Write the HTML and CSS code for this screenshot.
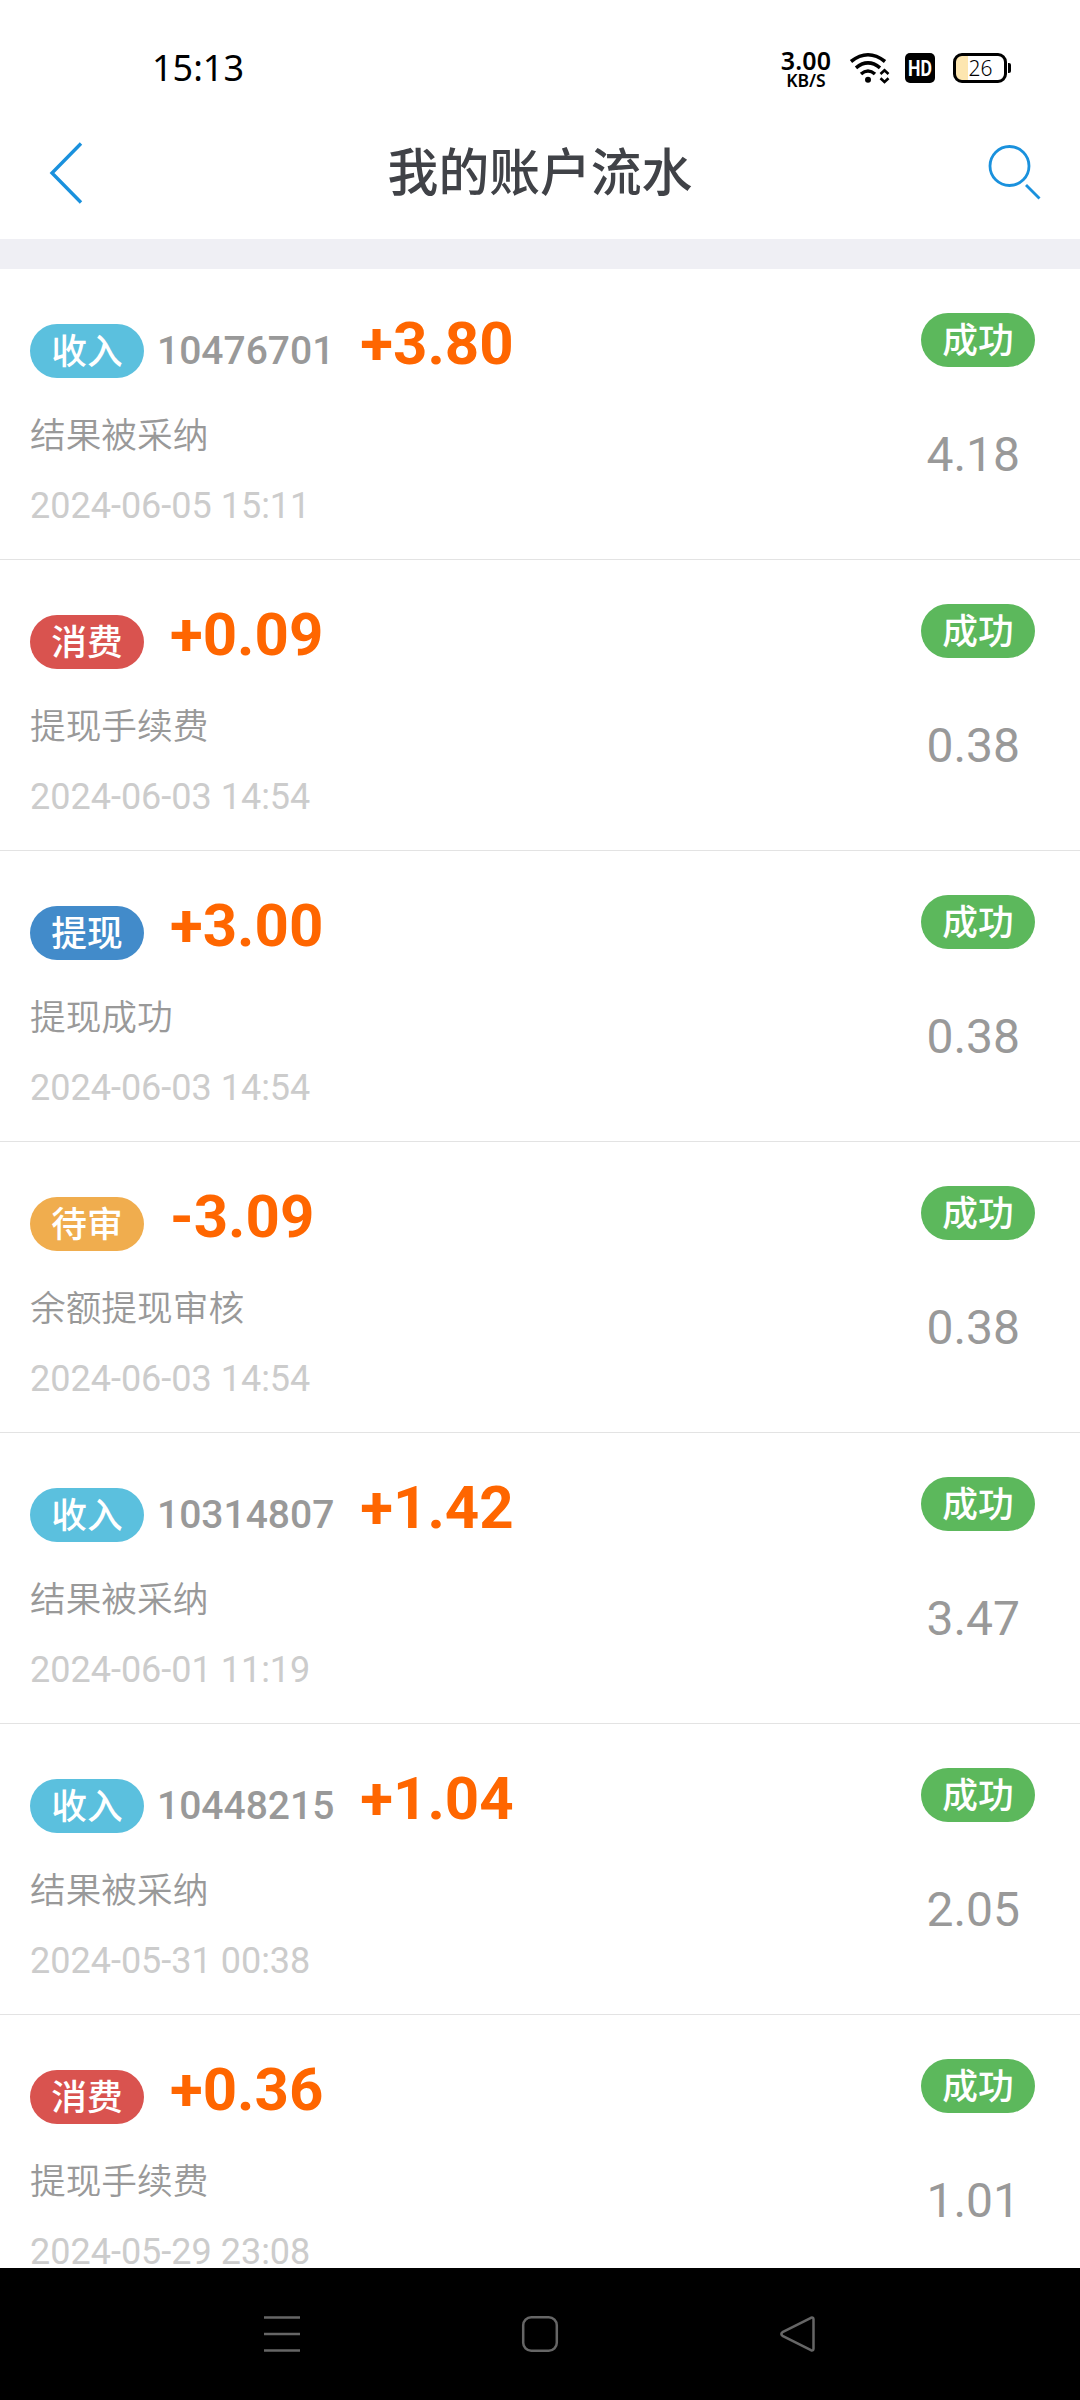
FILE: index.html
```html
<!DOCTYPE html>
<html lang="zh-CN">
<head>
<meta charset="utf-8">
<title>我的账户流水</title>
<link rel="stylesheet" href="styles.css">
</head>
<body>
<div class="screen">
  <div class="status">
    <span class="clock">15:13</span>
    <div class="status-right">
      <div class="speed"><span class="rate">3.00</span><span class="unit">KB/S</span></div>
      <svg class="wifi" width="42" height="32" viewBox="0 0 42 32" fill="none" stroke="#000">
        <path d="M2 9.5Q19 -4 36 9.5" stroke-width="3.6"/>
        <path d="M7 15.8Q19 6 31 15.8" stroke-width="3.6"/>
        <path d="M12 22Q19 16 26 22" stroke-width="3.6"/>
        <circle cx="19" cy="27.8" r="3" fill="#000" stroke="none"/>
        <path d="M31.5 22L35.5 18.3L39.5 22M31.5 26.3L35.5 30L39.5 26.3" stroke-width="2.6"/>
      </svg>
      <span class="hd"><span class="hd-text">HD</span></span>
      <div class="battery"><span class="level">26</span></div>
      <span class="nub"></span>
    </div>
  </div>
  <header class="titlebar">
    <svg width="40" height="64" viewBox="0 0 40 64" fill="none" stroke="#1a91dd" stroke-width="3.4"><path d="M35 2.5L6 32L35 61.500"/></svg>
    <h1>我的账户流水</h1>
    <svg width="56" height="56" viewBox="0 0 56 56" fill="none" stroke="#1a91dd" stroke-width="2.8"><circle cx="22.500" cy="21" r="19.500"/><path d="M39 40L52.500 53.500"/></svg>
  </header>
  <main class="list">
    <section class="row">
      <div class="info">
        <div class="head"><span class="badge income">收入</span><span class="order">10476701</span><span class="amount">+3.80</span></div>
        <p class="desc">结果被采纳</p><p class="date">2024-06-05 15:11</p>
      </div>
      <div class="side"><span class="badge ok">成功</span><span class="balance">4.18</span></div>
    </section>
    <section class="row">
      <div class="info">
        <div class="head"><span class="badge expense">消费</span><span class="amount">+0.09</span></div>
        <p class="desc">提现手续费</p><p class="date">2024-06-03 14:54</p>
      </div>
      <div class="side"><span class="badge ok">成功</span><span class="balance">0.38</span></div>
    </section>
    <section class="row">
      <div class="info">
        <div class="head"><span class="badge withdraw">提现</span><span class="amount">+3.00</span></div>
        <p class="desc">提现成功</p><p class="date">2024-06-03 14:54</p>
      </div>
      <div class="side"><span class="badge ok">成功</span><span class="balance">0.38</span></div>
    </section>
    <section class="row">
      <div class="info">
        <div class="head"><span class="badge pending">待审</span><span class="amount">-3.09</span></div>
        <p class="desc">余额提现审核</p><p class="date">2024-06-03 14:54</p>
      </div>
      <div class="side"><span class="badge ok">成功</span><span class="balance">0.38</span></div>
    </section>
    <section class="row">
      <div class="info">
        <div class="head"><span class="badge income">收入</span><span class="order">10314807</span><span class="amount">+1.42</span></div>
        <p class="desc">结果被采纳</p><p class="date">2024-06-01 11:19</p>
      </div>
      <div class="side"><span class="badge ok">成功</span><span class="balance">3.47</span></div>
    </section>
    <section class="row">
      <div class="info">
        <div class="head"><span class="badge income">收入</span><span class="order">10448215</span><span class="amount">+1.04</span></div>
        <p class="desc">结果被采纳</p><p class="date">2024-05-31 00:38</p>
      </div>
      <div class="side"><span class="badge ok">成功</span><span class="balance">2.05</span></div>
    </section>
    <section class="row">
      <div class="info">
        <div class="head"><span class="badge expense">消费</span><span class="amount">+0.36</span></div>
        <p class="desc">提现手续费</p><p class="date">2024-05-29 23:08</p>
      </div>
      <div class="side"><span class="badge ok">成功</span><span class="balance">1.01</span></div>
    </section>
  </main>
  <nav class="navbar">
    <svg width="40" height="40" viewBox="0 0 40 40" fill="none" stroke="#666" stroke-width="2.500"><path d="M2 3.500H38M2 20H38M2 36.500H38"/></svg>
    <svg width="40" height="40" viewBox="0 0 40 40" fill="none" stroke="#666" stroke-width="2.500"><rect x="3.200" y="3.200" width="33.600" height="33.600" rx="8"/></svg>
    <svg width="40" height="40" viewBox="0 0 40 40" fill="none" stroke="#666" stroke-width="2.500" stroke-linejoin="round"><path d="M4.500 18.200L33 3.800Q35.500 3 35.500 5.500V34.500Q35.500 37 33 36.200L4.500 21.800Q2.200 20 4.500 18.200Z"/></svg>
  </nav>
</div>
</body>
</html>
```
FILE: styles.css
```css
* { box-sizing: border-box; }
body {
  margin: 0;
  background: #fff;
  font-family: Roboto, "Noto Sans CJK SC", sans-serif;
}
h1, p { margin: 0; }
svg { display: block; flex: none; }
.screen {
  width: 1080px;
  height: 2400px;
  display: flex;
  flex-direction: column;
  overflow: hidden;
}
.status {
  height: 106px;
  flex: none;
  display: flex;
  justify-content: space-between;
  padding: 30px 69px 0 152px;
  color: #000;
  font-family: "Noto Sans", sans-serif;
}
.clock { font-size: 36px; line-height: 76px; }
.status-right { display: flex; align-items: center; height: 76px; }
.speed {
  display: flex;
  flex-direction: column;
  align-items: center;
  width: 54px;
  margin-right: 16px;
  font-weight: 600;
}
.rate { font-size: 25px; line-height: 24px; letter-spacing: 0.2px; }
.unit { font-size: 17.5px; line-height: 17px; }
.wifi { margin-right: 14px; }
.hd {
  width: 30px;
  height: 30px;
  margin-right: 18px;
  display: flex;
  justify-content: center;
  border-radius: 5px;
  background: #000;
  color: #fff;
}
.hd-text {
  font: 700 22px/31px Roboto, sans-serif;
  transform: scaleX(0.8);
}
.battery {
  width: 54px;
  height: 30px;
  border: 3px solid #000;
  border-radius: 9px;
  background: linear-gradient(90deg, #fde6b0 12px, #fff 12px);
  text-align: center;
}
.level { display: block; padding-left: 1px; font-size: 21px; line-height: 24px; font-weight: 300; }
.nub { width: 3px; height: 10px; margin-left: 1px; border-radius: 0 2px 2px 0; background: #000; }
.titlebar {
  height: 133px;
  flex: none;
  display: flex;
  align-items: center;
  justify-content: space-between;
  padding: 0 37px 0 46px;
}
.titlebar h1 {
  margin-left: 7px;
  padding-top: 3px;
  color: #404247;
  font-size: 50.8px;
  line-height: 80px;
  font-weight: 500;
}
.list {
  flex: 1;
  min-height: 0;
  overflow: hidden;
  border-top: 30px solid #efeff4;
}
.row {
  height: 291px;
  display: flex;
  justify-content: space-between;
  padding: 44px 45px 0 30px;
  border-bottom: 1px solid #e3e3e3;
}
.info { padding-top: 11px; }
.head { display: flex; align-items: center; height: 54px; }
.badge {
  width: 114px;
  height: 54px;
  border-radius: 27px;
  color: #fff;
  font-size: 35.7px;
  line-height: 56px;
  font-weight: 500;
  text-align: center;
}
.income { background: #5bc0de; }
.expense { background: #d9534f; }
.withdraw { background: #428bca; }
.pending { background: #f0ad4e; }
.ok { background: #5cb85c; }
.order {
  margin-left: 13px;
  color: #999;
  font-size: 39px;
  line-height: 52px;
  font-weight: 500;
}
.amount {
  margin: 0 0 15px 26px;
  color: #f60;
  font-size: 60px;
  line-height: 39px;
  font-weight: 700;
}
.desc { margin-top: 31px; color: #999; font-size: 35.7px; line-height: 54px; font-weight: 350; }
.date { margin-top: 16px; color: #ccc; font-size: 36px; line-height: 54px; }
.side { display: flex; flex-direction: column; align-items: flex-end; }
.balance { margin: 58px 15px 0 0; color: #999; font-size: 48px; line-height: 60px; }
.navbar {
  height: 132px;
  flex: none;
  display: flex;
  justify-content: space-between;
  align-items: center;
  padding: 0 262px;
  background: #000;
}
```
